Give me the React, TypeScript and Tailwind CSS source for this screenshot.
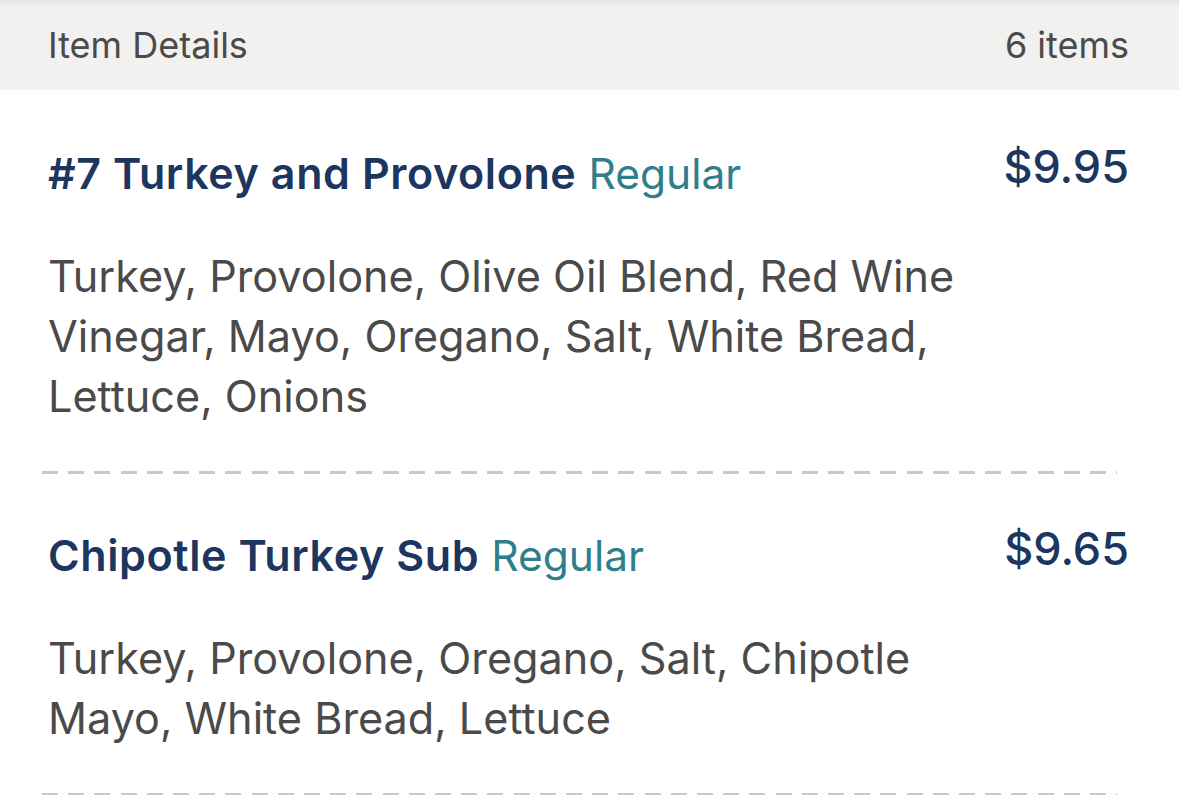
const items = [
  {
    name: "#7 Turkey and Provolone",
    size: "Regular",
    price: "$9.95",
    desc: "Turkey, Provolone, Olive Oil Blend, Red Wine Vinegar, Mayo, Oregano, Salt, White Bread, Lettuce, Onions",
  },
  {
    name: "Chipotle Turkey Sub",
    size: "Regular",
    price: "$9.65",
    desc: "Turkey, Provolone, Oregano, Salt, Chipotle Mayo, White Bread, Lettuce",
  },
];

function Dashes() {
  return (
    <div className="ml-[42px] mr-[62px] h-[3px] bg-[repeating-linear-gradient(90deg,#c9c9c9_0px,#c9c9c9_16px,transparent_16px,transparent_26.2px)]" />
  );
}

export default function App() {
  return (
    <div className="min-h-screen w-full bg-white font-['Inter',sans-serif] antialiased">
      {/* Header */}
      <div className="flex h-[90px] items-center justify-between bg-[#f2f1f0] pl-[48px] pr-[50px] shadow-[inset_0_6px_6px_-4px_rgba(0,0,0,0.07)]">
        <span className="text-[36px] text-[#4a4a4a]">Item Details</span>
        <span className="text-[36px] text-[#4a4a4a]">6 items</span>
      </div>

      {items.map((item, i) => (
        <div key={item.name}>
          <div className={`pl-[48px] pr-[50px] pb-[45px] ${i === 0 ? "pt-[53px]" : "pt-[51px]"}`}>
            <div className="flex items-start justify-between">
              <div className="text-[43px] leading-[60px]">
                <span className="font-semibold tracking-[0.6px] text-[#1c365f]">{item.name}</span>{" "}
                <span className="text-[42.5px] text-[#2e7f8b]">{item.size}</span>
              </div>
              <div className="text-[45px] leading-[48px] font-medium text-[#1c365f]">
                {item.price}
              </div>
            </div>
            <p className="mt-[42px] max-w-[960px] text-[43.2px] leading-[60px] text-[#4a4a4a]">
              {item.desc}
            </p>
          </div>
          <Dashes />
        </div>
      ))}
    </div>
  );
}
